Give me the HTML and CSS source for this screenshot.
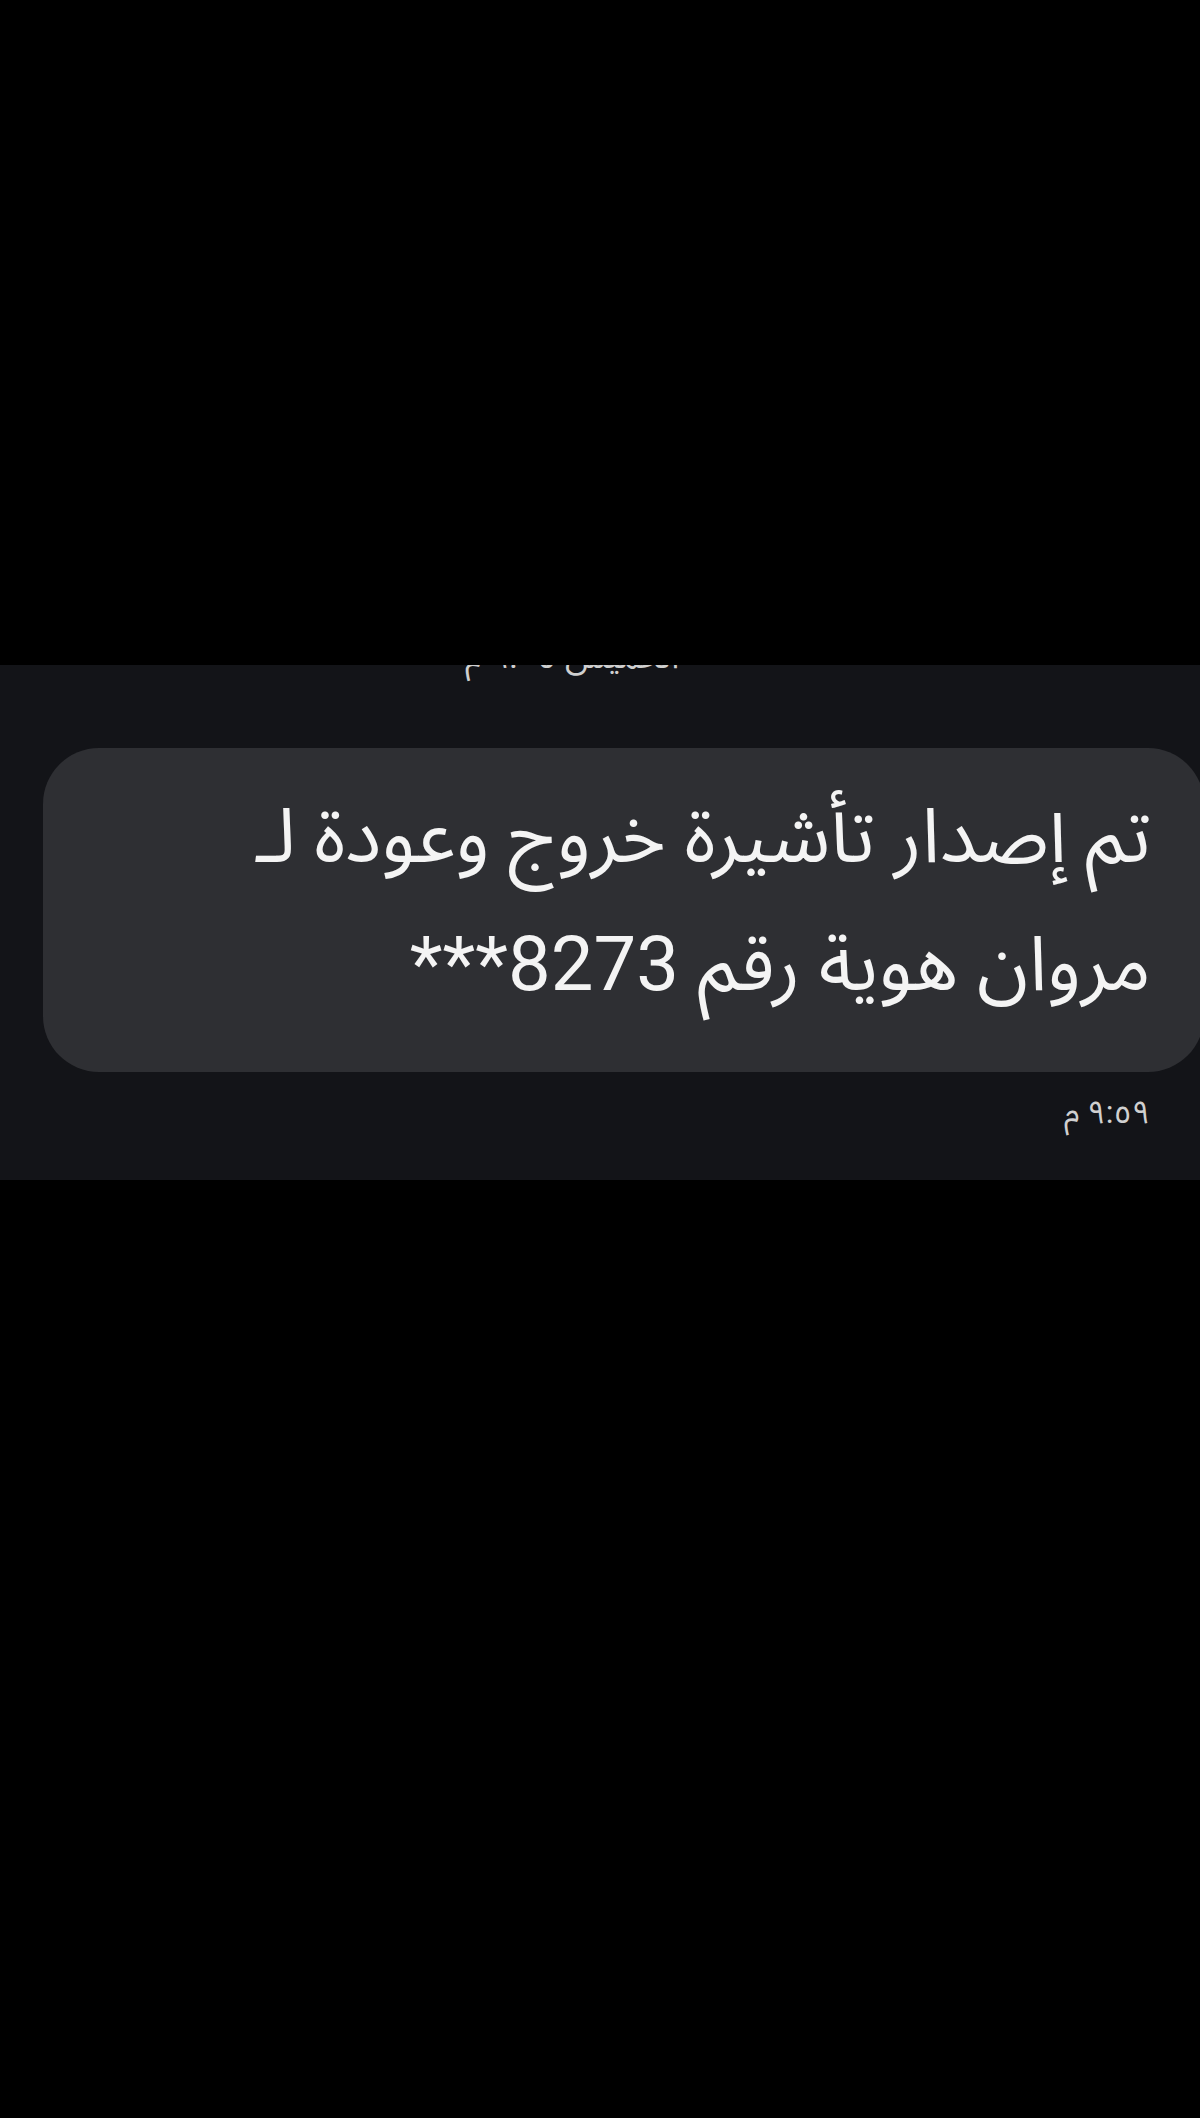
FILE: index.html
```html
<!DOCTYPE html>
<html lang="ar" dir="rtl">
<head>
<meta charset="utf-8">
<title>رسالة</title>
<link rel="stylesheet" href="styles.css">
</head>
<body>
<div class="top"></div>
<section class="panel">
  <div class="date-header">الخميس ٩:٠٥ م</div>
  <div class="bubble">
    <p class="msg">تم إصدار تأشيرة خروج وعودة لـ<br>مروان هوية رقم 8273***</p>
  </div>
  <div class="time">٩:٥٩ م</div>
</section>
<div class="bottom"></div>
</body>
</html>
```
FILE: styles.css
```css
html, body {
  margin: 0;
  padding: 0;
  background: #000;
}
body {
  width: 1200px;
  height: 2118px;
  overflow: hidden;
  font-family: Roboto, "Noto Sans Arabic", "DejaVu Sans", sans-serif;
  color: #f2f2f2;
}
.top {
  height: 665px;
  background: #000;
}
.panel {
  height: 515px;
  background: #131418;
  overflow: hidden;
  display: flex;
  flex-direction: column;
}
.date-header {
  height: 40px;
  margin-top: -29px;
  text-align: center;
  font-size: 34px;
  line-height: 40px;
  color: #cfcfcf;
  padding-right: 56px;
}
.bubble {
  margin-top: 72px;
  margin-left: 43px;
  margin-right: -4px;
  height: 324px;
  box-sizing: border-box;
  background: #2e2f33;
  border-radius: 56px;
  padding: 24px 53px 0 0;
}
.msg {
  margin: 0;
  font-size: 76px;
  line-height: 128px;
  color: #f4f4f4;
}
.time {
  margin-top: 20px;
  padding-right: 50px;
  font-size: 32px;
  line-height: 40px;
  color: #d0d0d0;
}
```
